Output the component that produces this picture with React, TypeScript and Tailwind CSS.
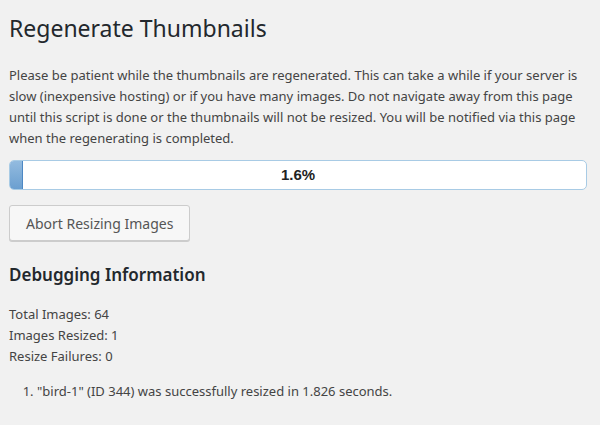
export default function App() {
  const percent = 1.6;
  const stats = [
    ["Total Images", "64"],
    ["Images Resized", "1"],
    ["Resize Failures", "0"],
  ];

  return (
    <div className="min-h-[425px] w-[600px] bg-[#f1f1f1] px-[9px] font-['Noto_Sans',sans-serif] text-[#444]">
      <h1 className="pt-[13px] text-[23px] leading-[30px] font-normal text-[#23282d]">
        Regenerate Thumbnails
      </h1>

      <p className="mt-[22px] text-[13px] leading-[21px]">
        Please be patient while the thumbnails are regenerated. This can take a while if your server is
        <br />
        slow (inexpensive hosting) or if you have many images. Do not navigate away from this page
        <br />
        until this script is done or the thumbnails will not be resized. You will be notified via this page
        <br />
        when the regenerating is completed.
      </p>

      {/* progress bar */}
      <div className="relative mt-[11px] h-[30px] w-[578px] overflow-hidden rounded-[5px] border border-[#a8cbe5] bg-white">
        <div
          className="h-full border-r border-[#4d88c4] bg-gradient-to-b from-[#93bbdf] to-[#6b9fd0]"
          style={{ width: `${Math.max(percent, 2.2)}%` }}
        />
        <div className="absolute inset-0 flex items-center justify-center font-['Liberation_Sans',sans-serif] text-[15px] font-bold text-[#222]">
          {percent}%
        </div>
      </div>

      <button className="mt-[15px] h-[36px] rounded-[3px] border border-[#cccccc] bg-[#f7f7f7] px-[16px] text-[14px] text-[#555] shadow-[0_1px_0_#cccccc]">
        Abort Resizing Images
      </button>

      <h3 className="mt-[22px] text-[17px] leading-[24px] font-semibold text-[#23282d]">
        Debugging Information
      </h3>

      <div className="mt-[17px] text-[13px] leading-[21px]">
        {stats.map(([label, value]) => (
          <div key={label}>
            {label}: {value}
          </div>
        ))}
      </div>

      <ol className="mt-[14px] list-decimal pl-[28px] text-[13px] leading-[21px]">
        <li>"bird-1" (ID 344) was successfully resized in 1.826 seconds.</li>
      </ol>
    </div>
  );
}
